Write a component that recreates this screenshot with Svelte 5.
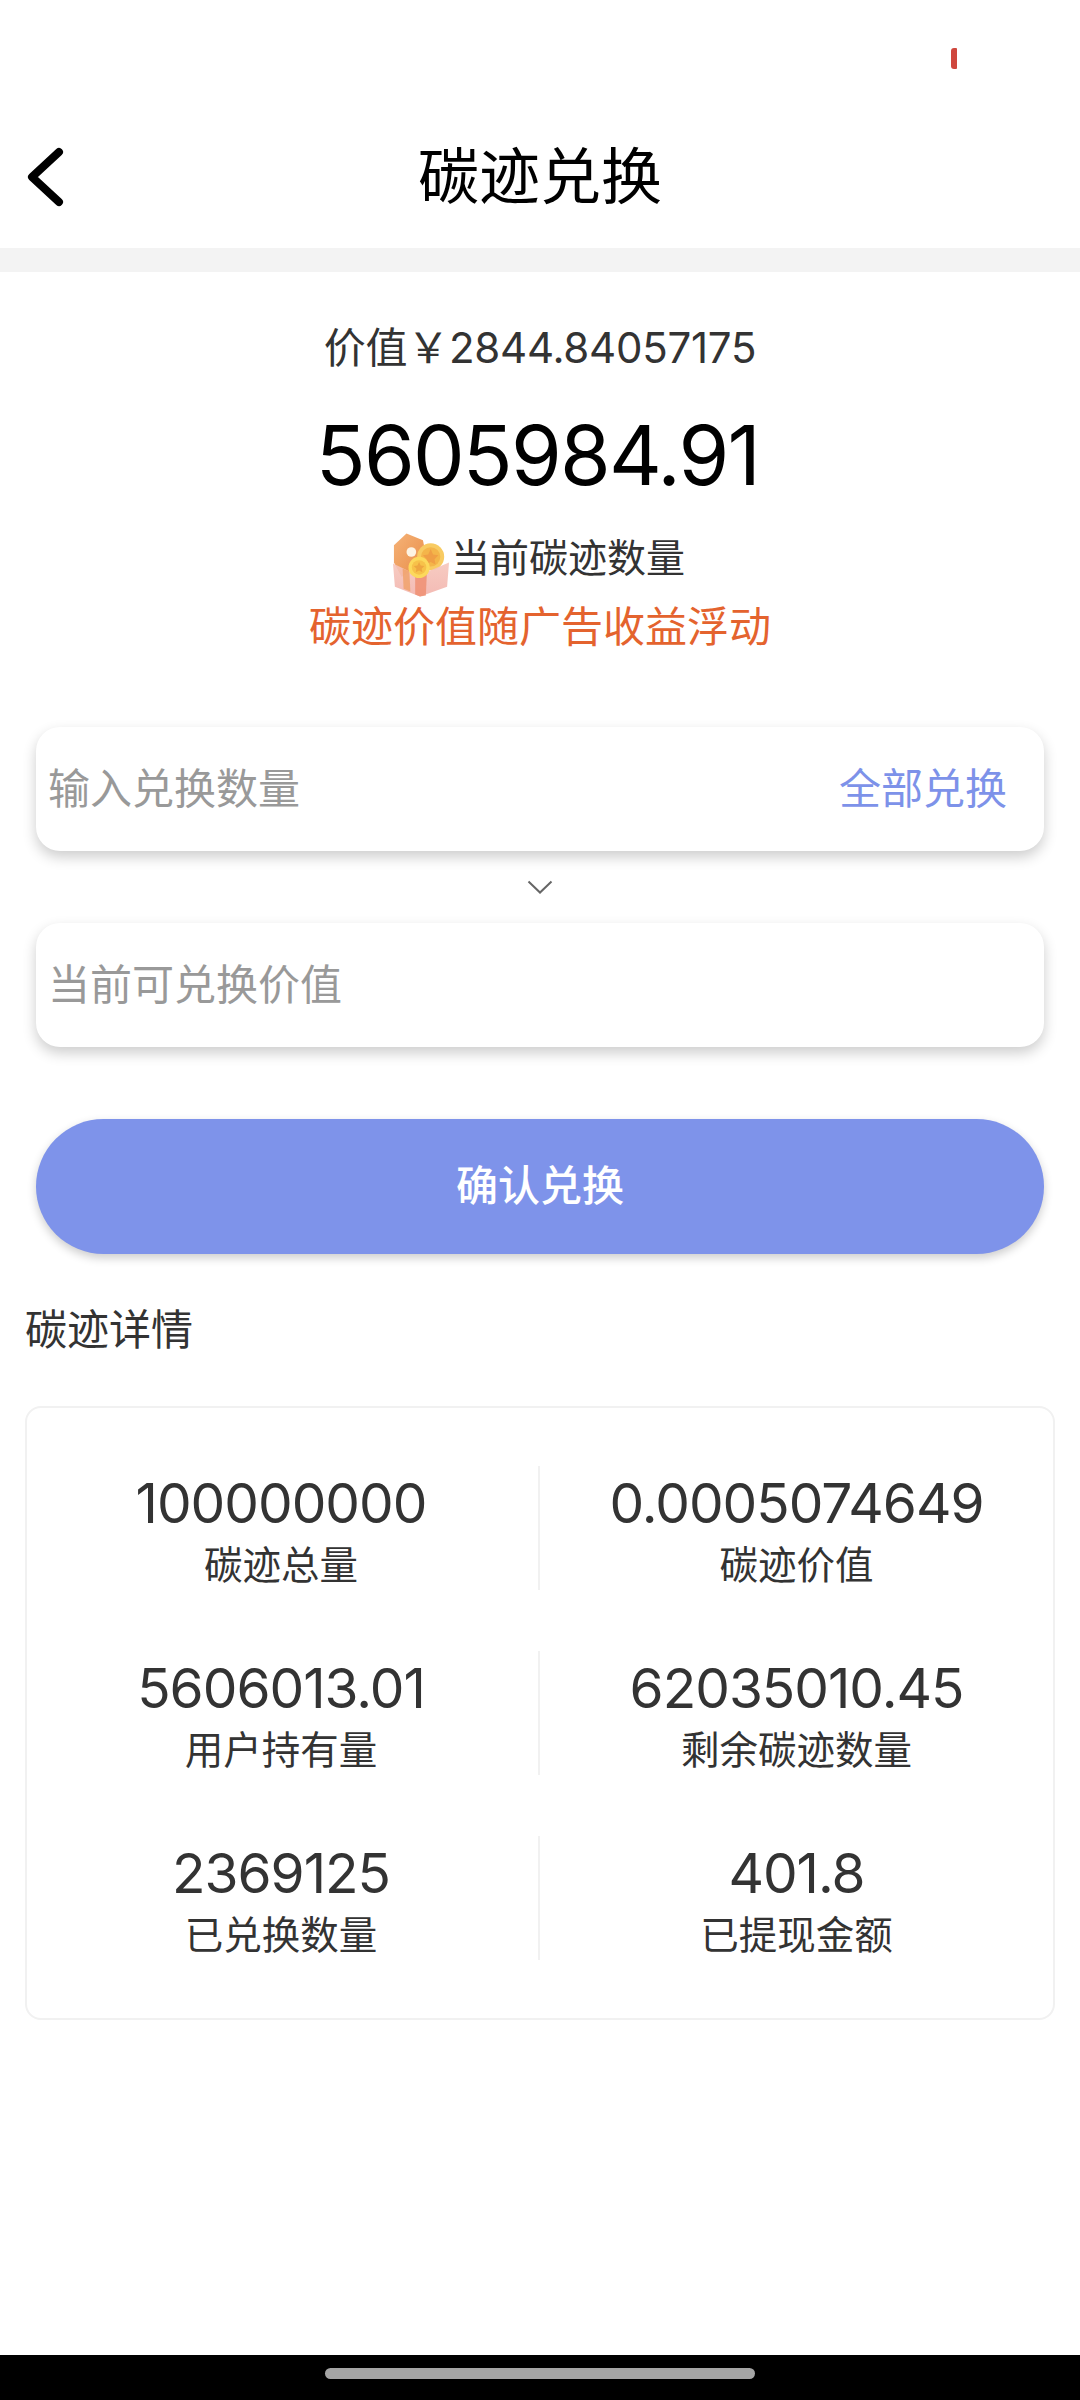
<script>
	const stats = [
		{ value: '100000000', label: '碳迹总量' },
		{ value: '0.0005074649', label: '碳迹价值' },
		{ value: '5606013.01', label: '用户持有量' },
		{ value: '62035010.45', label: '剩余碳迹数量' },
		{ value: '2369125', label: '已兑换数量' },
		{ value: '401.8', label: '已提现金额' }
	]
</script>

<div class="page">
	<div class="status"><span class="dot"></span></div>

	<header>
		<svg class="back" width="38" height="60" viewBox="0 0 38 60">
			<path d="M33 5 L6 30 L33 55" fill="none" stroke="#000" stroke-width="8" stroke-linecap="round" stroke-linejoin="round" />
		</svg>
		<h1>碳迹兑换</h1>
	</header>
	<div class="band"></div>

	<section class="summary">
		<div class="worth">价值￥2844.84057175</div>
		<div class="amount">5605984.91</div>
		<div class="current">
			<svg class="gift" width="58" height="65" viewBox="0 0 60 66">
				<defs>
					<linearGradient id="tag" x1="0" y1="0" x2="1" y2="1">
						<stop offset="0" stop-color="#f5b277" />
						<stop offset="1" stop-color="#e88b45" />
					</linearGradient>
					<linearGradient id="box" x1="0" y1="0" x2="0" y2="1">
						<stop offset="0" stop-color="#f6c6bb" />
						<stop offset="1" stop-color="#f2b3ac" />
					</linearGradient>
				</defs>
				<path d="M2 12 L15 0 L32 7 L36 26 L10 45 L2 30 Z" fill="url(#tag)" />
				<circle cx="20" cy="19" r="5" fill="#fdf3e3" />
				<circle cx="40" cy="24" r="14" fill="#f8cb62" />
				<circle cx="40" cy="24" r="10" fill="#f4b54a" />
				<path d="M40 16 L42.5 21.5 L48 22.5 L44 26.5 L45 32 L40 29.5 L35 32 L36 26.5 L32 22.5 L37.5 21.5 Z" fill="#f09f45" />
				<path d="M1 31 L20 40 L40 38 L59 30 L57 55 L29 65 L3 55 Z" fill="url(#box)" opacity="0.9" />
				<path d="M11 36 L18 39 L19 60 L12 57 Z" fill="#f0a066" opacity="0.8" />
				<path d="M24 42 L36 42 L35 64 L29 65 L24 63 Z" fill="#ee8f72" opacity="0.85" />
				<circle cx="28" cy="35" r="11" fill="#fcd95c" />
				<circle cx="28" cy="35" r="7.5" fill="#f7c24a" />
				<path d="M28 29.5 L29.7 33 L33.5 33.6 L30.7 36.3 L31.4 40 L28 38.2 L24.6 40 L25.3 36.3 L22.5 33.6 L26.3 33 Z" fill="#eea640" />
			</svg>
			<span>当前碳迹数量</span>
		</div>
		<div class="note">碳迹价值随广告收益浮动</div>
	</section>

	<section class="form">
		<div class="field">
			<span class="placeholder">输入兑换数量</span>
			<span class="all">全部兑换</span>
		</div>
		<svg class="arrow" width="26" height="14" viewBox="0 0 26 14">
			<path d="M1.5 1.5 L13 12.5 L24.5 1.5" fill="none" stroke="#666" stroke-width="2" />
		</svg>
		<div class="field">
			<span class="placeholder">当前可兑换价值</span>
		</div>
		<button>确认兑换</button>
	</section>

	<h2>碳迹详情</h2>

	<div class="card">
		{#each stats as s}
			<div class="cell">
				<div class="value">{s.value}</div>
				<div class="label">{s.label}</div>
			</div>
		{/each}
	</div>

	<div class="spacer"></div>
	<div class="navbar"><span class="handle"></span></div>
</div>

<style>
	:global(body) {
		margin: 0;
		background: #fff;
	}
	.page {
		width: 1080px;
		height: 2400px;
		display: flex;
		flex-direction: column;
		font-family: 'Inter', 'Noto Sans CJK SC', sans-serif;
		color: #333;
	}
	.status {
		height: 48px;
		padding-left: 951px;
		box-sizing: border-box;
		display: flex;
		align-items: flex-end;
	}
	.dot {
		width: 6px;
		height: 21px;
		margin-bottom: -21px;
		background: #cf473d;
		border-radius: 3px 1px 1px 3px;
	}
	header {
		height: 200px;
		display: flex;
		align-items: center;
		justify-content: center;
		position: relative;
	}
	.back {
		position: absolute;
		left: 26px;
		top: 99px;
	}
	h1 {
		margin: 0;
		padding-top: 49px;
		font-size: 61px;
		font-weight: 400;
		color: #000;
	}
	.band {
		height: 24px;
		background: #f3f3f3;
	}
	.summary {
		display: flex;
		flex-direction: column;
		align-items: center;
	}
	.worth {
		margin-top: 49px;
		font-size: 42px;
		line-height: 54px;
		letter-spacing: -0.25px;
	}
	.amount {
		margin-top: 31px;
		padding-right: 5px;
		font-size: 82px;
		line-height: 100px;
		letter-spacing: -1.8px;
		color: #000;
	}
	.current {
		margin-top: 27px;
		height: 65px;
		padding-right: 3px;
		display: flex;
		align-items: flex-start;
		gap: 1px;
		font-size: 39px;
		line-height: 50px;
	}
	.note {
		font-size: 42px;
		line-height: 54px;
		margin-top: 2px;
		color: #e4632e;
	}
	.form {
		margin-top: 73px;
		padding: 0 36px;
		display: flex;
		flex-direction: column;
		align-items: center;
	}
	.field {
		width: 100%;
		height: 124px;
		box-sizing: border-box;
		padding: 0 37px 8px 12px;
		display: flex;
		align-items: center;
		justify-content: space-between;
		background: #fff;
		border-radius: 24px;
		box-shadow: 0 6px 14px rgba(0, 0, 0, 0.2);
		font-size: 42px;
	}
	.placeholder {
		color: #999;
	}
	.all {
		color: #7d92e9;
	}
	.arrow {
		margin: 29px 0;
		display: block;
	}
	button {
		width: 100%;
		height: 135px;
		margin-top: 72px;
		padding: 0 0 8px;
		border: none;
		border-radius: 68px;
		background: #7e93ea;
		color: #fff;
		font: inherit;
		font-size: 42px;
		font-weight: 500;
		box-shadow: 0 4px 10px rgba(0, 0, 0, 0.2);
	}
	h2 {
		margin: 49px 0 0 25px;
		font-size: 42px;
		line-height: 54px;
		font-weight: 400;
	}
	.card {
		margin: 49px 25px 0 25px;
		padding: 58px 0;
		border: 2px solid #f1f1f1;
		border-radius: 16px;
		display: grid;
		grid-template-columns: 1fr 1fr;
		row-gap: 61px;
	}
	.cell {
		height: 124px;
		padding-top: 4px;
		box-sizing: border-box;
		display: flex;
		flex-direction: column;
		align-items: center;
		justify-content: center;
	}
	.cell:nth-child(odd) {
		padding-right: 3px;
		border-right: 2px solid #f1f1f1;
	}
	.value {
		font-size: 55px;
		line-height: 70px;
		letter-spacing: -1px;
	}
	.label {
		font-size: 38.5px;
		line-height: 54px;
	}
	.spacer {
		flex: 1;
	}
	.navbar {
		height: 45px;
		background: #000;
		display: flex;
		justify-content: center;
		padding-top: 13px;
		box-sizing: border-box;
	}
	.handle {
		width: 430px;
		height: 11px;
		border-radius: 6px;
		background: #a5a5a5;
	}
</style>
